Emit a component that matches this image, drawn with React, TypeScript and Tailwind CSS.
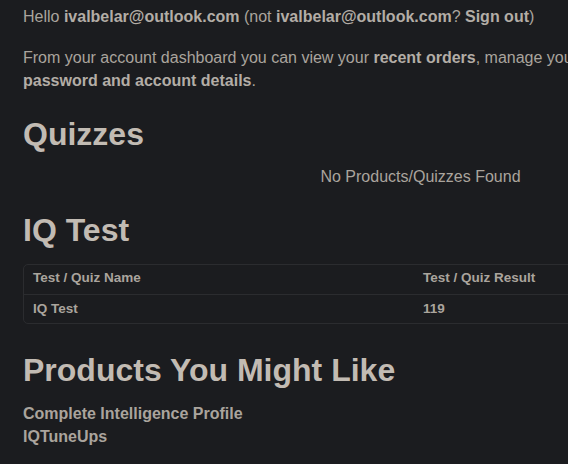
import React from "react";

// Account dashboard in a dark theme, cut off at the right like the original page
const results = [{ name: "IQ Test", score: "119" }];
const products = ["Complete Intelligence Profile", "IQTuneUps"];

export default function App() {
    return (
        <div className="w-[568px] h-[464px] overflow-hidden bg-[#1b1c1f] text-[#aaa49d] font-['Liberation_Sans',Arial,sans-serif] text-[16px] leading-[24px]">
            <div className="w-[795px] ml-[23px] pt-[5px]">
                <p>
                    Hello <b className="text-[#b3ada6]">ivalbelar@outlook.com</b> (not{" "}
                    <b className="text-[#b3ada6]">ivalbelar@outlook.com</b>? <b className="text-[#b3ada6]">Sign out</b>)
                </p>
                <p className="mt-[17px] leading-[23px]">
                    From your account dashboard you can view your <b className="text-[#b3ada6]">recent orders</b>, manage your
                    shipping addresses and edit your
                    <br />
                    <b className="text-[#b3ada6]">password and account details</b>.
                </p>

                <h2 className="mt-[23px] text-[32px] leading-[38px] font-bold text-[#c2bbb3]">Quizzes</h2>
                <p className="mt-[12px] text-center">No Products/Quizzes Found</p>

                <h2 className="mt-[22px] text-[32px] leading-[38px] font-bold text-[#c2bbb3]">IQ Test</h2>
                <div className="mt-[15px] border border-[#2b2c2f] rounded-[5px] text-[13.5px] leading-[15px] font-bold text-[#aaa49d]">
                    <div className="grid grid-cols-[390px_1fr] border-b border-[#2b2c2f]">
                        <div className="px-[9px] pt-[5px] pb-[9px]">Test / Quiz Name</div>
                        <div className="px-[9px] pt-[5px] pb-[9px]">Test / Quiz Result</div>
                    </div>
                    {results.map((r) => (
                        <div key={r.name} className="grid grid-cols-[390px_1fr]">
                            <div className="px-[9px] pt-[6px] pb-[7px]">{r.name}</div>
                            <div className="px-[9px] pt-[6px] pb-[7px]">{r.score}</div>
                        </div>
                    ))}
                </div>

                <h2 className="mt-[27px] text-[32px] leading-[38px] font-bold text-[#c2bbb3]">Products You Might Like</h2>
                <ul className="mt-[13px] font-bold leading-[23px]">
                    {products.map((p) => (
                        <li key={p}>{p}</li>
                    ))}
                </ul>
            </div>
        </div>
    );
}
